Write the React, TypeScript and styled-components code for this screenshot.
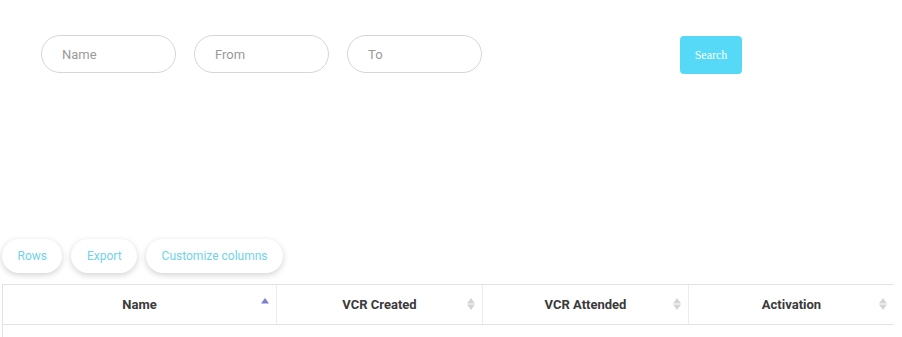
import * as React from "react";
import styled, { createGlobalStyle } from "styled-components";

const GlobalStyle = createGlobalStyle`
  body {
    margin: 0;
    background: #fff;
    font-family: Roboto, "Liberation Sans", sans-serif;
  }
`;

const Page = styled.div`
  width: 902px;
  height: 337px;
  overflow: hidden;
`;

const FilterBar = styled.form`
  display: flex;
  align-items: flex-start;
  padding: 35px 0 0 41px;
  height: 239px;
  box-sizing: border-box;
`;

const Fields = styled.div`
  display: flex;
  gap: 18px;
`;

const Field = styled.input`
  width: 135px;
  height: 38px;
  box-sizing: border-box;
  border: 1px solid #d6d6d6;
  border-radius: 19px;
  padding: 0 20px;
  font-family: Roboto, "Liberation Sans", sans-serif;
  font-size: 13px;
  color: #555;
  outline: none;
  &::placeholder {
    color: #9a9a9a;
  }
`;

const SearchButton = styled.button`
  margin: 1px 0 0 198px;
  width: 62px;
  height: 38px;
  border: none;
  border-radius: 4px;
  background: #55d9f6;
  color: #fff;
  font-family: "Liberation Serif", serif;
  font-size: 12px;
  cursor: pointer;
`;

const Toolbar = styled.div`
  display: flex;
  gap: 9px;
  padding-left: 2px;
  height: 45px;
`;

const ToolButton = styled.button`
  height: 34px;
  padding: 0 15.5px;
  border: none;
  border-radius: 17px;
  background: #fff;
  box-shadow: 0 2px 6px rgba(0, 0, 0, 0.18);
  color: #6fd3ea;
  font-family: Roboto, "Liberation Sans", sans-serif;
  font-size: 12px;
  cursor: pointer;
`;

const Table = styled.div`
  margin-left: 2px;
  width: 891px;
  border-top: 1px solid #e2e2e2;
  border-left: 1px solid #e2e2e2;
  height: 60px;
`;

const HeaderRow = styled.div`
  display: grid;
  grid-template-columns: 274px 206px 206px 205px;
  border-bottom: 1px solid #e2e2e2;
`;

const HeaderCell = styled.div`
  position: relative;
  height: 39px;
  display: flex;
  align-items: center;
  justify-content: center;
  font-size: 13px;
  font-weight: 700;
  color: #3a3a3a;
  border-right: 1px solid #ececec;
  &:last-child {
    border-right: none;
  }
`;

const SortIcon = styled.svg`
  position: absolute;
  right: 6px;
  top: 10px;
`;

type SortState = "asc" | "none";

const Sort = ({ state }: { state: SortState }) =>
  state === "asc" ? (
    <SortIcon width="10" height="18" viewBox="0 0 10 18">
      <path d="M1 8.5 L5 3 L9 8.5 Z" fill="#7f7fd5" />
    </SortIcon>
  ) : (
    <SortIcon width="10" height="18" viewBox="0 0 10 18">
      <path d="M1 8.5 L5 3 L9 8.5 Z" fill="#d4d4d4" />
      <path d="M1 9.5 L5 15 L9 9.5 Z" fill="#d4d4d4" />
    </SortIcon>
  );

const columns: { title: string; sort: SortState }[] = [
  { title: "Name", sort: "asc" },
  { title: "VCR Created", sort: "none" },
  { title: "VCR Attended", sort: "none" },
  { title: "Activation", sort: "none" },
];

export default function App() {
  return (
    <Page>
      <GlobalStyle />
      <FilterBar onSubmit={(e) => e.preventDefault()}>
        <Fields>
          <Field placeholder="Name" />
          <Field placeholder="From" />
          <Field placeholder="To" />
        </Fields>
        <SearchButton type="submit">Search</SearchButton>
      </FilterBar>
      <Toolbar>
        <ToolButton>Rows</ToolButton>
        <ToolButton>Export</ToolButton>
        <ToolButton>Customize columns</ToolButton>
      </Toolbar>
      <Table>
        <HeaderRow>
          {columns.map((c) => (
            <HeaderCell key={c.title}>
              {c.title}
              <Sort state={c.sort} />
            </HeaderCell>
          ))}
        </HeaderRow>
      </Table>
    </Page>
  );
}
